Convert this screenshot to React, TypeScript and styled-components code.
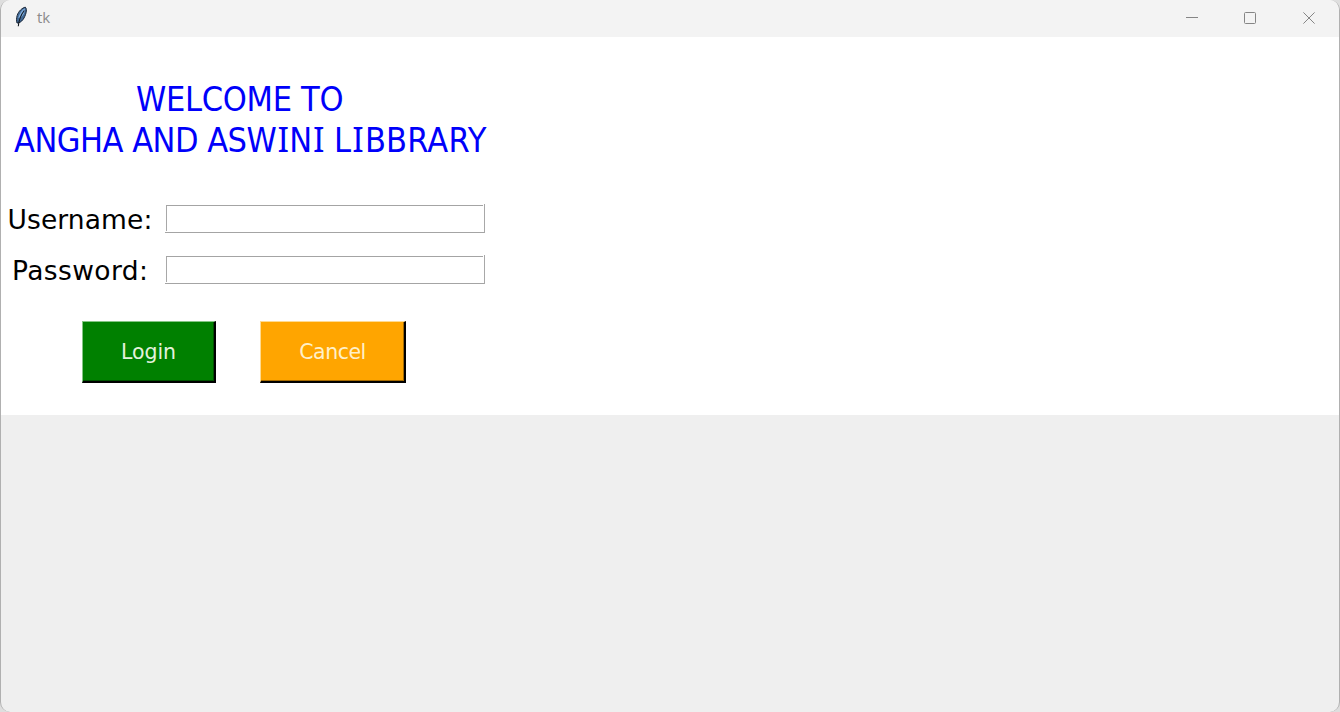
import React from "react";
import styled, { createGlobalStyle } from "styled-components";

const GlobalStyle = createGlobalStyle`
  * { box-sizing: border-box; }
  body { margin: 0; background: #d4d4d4; overflow: hidden; }
`;

const Desktop = styled.div`
  height: 712px;
  background: #dedede;
`;

const Window = styled.main`
  display: flex;
  flex-direction: column;
  width: 1340px;
  height: 712px;
  overflow: hidden;
  background: #efefef;
  border: solid #b0b0b0;
  border-width: 0 1px;
  border-radius: 10px;
`;

const TitleBar = styled.header`
  display: flex;
  align-items: flex-start;
  height: 37px;
  flex: none;
  background: #f3f3f3;
  padding-left: 13px;
`;

const AppName = styled.span`
  flex: 1;
  margin-left: 8px;
  color: #8b8b8b;
  font: 15px/35px "Open Sans", sans-serif;
`;

const Controls = styled.div`
  display: flex;
  height: 36px;
  margin-right: 1px;
`;

const ControlButton = styled.button`
  display: grid;
  place-items: center;
  width: 58.5px;
  height: 36px;
  padding: 0;
  border: 0;
  background: none;
`;

const Form = styled.form`
  flex: none;
  height: 378px;
  padding-top: 42px;
  background: #fff;
`;

const Heading = styled.h1`
  width: 497px;
  margin: 0;
  color: #0000fa;
  font: 400 34px/41px "DejaVu Sans Condensed", "DejaVu Sans", sans-serif;
  font-stretch: condensed;
  white-space: nowrap;
`;

const HeadingLine = styled.span<{ $indent: number; $spacing: number }>`
  display: block;
  height: 41px;
  padding-left: ${(p) => p.$indent}px;
  letter-spacing: ${(p) => p.$spacing}px;
`;

const BarredI = styled.span`
  margin: 0 0.8px 0 1.2px;
  font-family: "Noto Sans", sans-serif;
  font-stretch: normal;
  line-height: 0;
`;

const Word = styled.span<{ $spacing: number }>`
  letter-spacing: ${(p) => p.$spacing}px;
`;

const Fields = styled.div`
  display: grid;
  gap: 21px;
  margin-top: 43px;
`;

const Field = styled.div`
  display: flex;
  align-items: center;
  height: 30px;
`;

const Label = styled.label<{ $indent: number; $spacing: number }>`
  width: 164px;
  padding: 2px 0 0 ${(p) => p.$indent}px;
  color: #000;
  font: 26.5px/30px "DejaVu Sans", sans-serif;
  letter-spacing: ${(p) => p.$spacing}px;
  white-space: nowrap;
`;

/* Sunken groove: the bottom and right edges run one pixel past the others. */
const Input = styled.input`
  width: 320px;
  height: 30px;
  padding: 2px 5px;
  border: 0;
  outline: 0;
  background:
    linear-gradient(#a4a4a4 0 0) 1px 1px / 317px 1px no-repeat,
    linear-gradient(#a8a8a8 0 0) 1px 1px / 1px 26px no-repeat,
    linear-gradient(#a8a8a8 0 0) 319px 0 / 1px 29px no-repeat,
    linear-gradient(#a4a4a4 0 0) 0 28px / 320px 1px no-repeat,
    #fff;
  font: 20px "DejaVu Sans", sans-serif;
`;

const Actions = styled.div`
  display: flex;
  gap: 44px;
  margin: 36px 0 0 81px;
`;

const ActionButton = styled.button<{ $width: number; $color: string; $light: string; $dark: string; $text: string; $spacing: number }>`
  width: ${(p) => p.$width}px;
  height: 62px;
  padding: 2px 0 0;
  border: solid;
  border-width: 1px 2px 2px 1px;
  border-color: ${(p) => p.$light} #000 #000 ${(p) => p.$light};
  box-shadow: inset -1px -1px ${(p) => p.$dark};
  background: ${(p) => p.$color};
  color: ${(p) => p.$text};
  font: 20.5px/57px "DejaVu Sans", sans-serif;
  letter-spacing: ${(p) => p.$spacing}px;
`;

const FeatherIcon = styled.svg`
  flex: none;
  margin-top: 6px;
`;

const Feather = () => (
  <FeatherIcon width="15" height="22" viewBox="0 0 15 22" aria-hidden="true">
    <path d="M11.3 1.2C8.3 1.8 4.4 5.2 3.2 9.4 2.4 12 2.3 14.6 3 17c2.1.1 4.4-1.2 6.1-3.6C11.5 10 13.8 3.3 11.3 1.2Z" fill="#426995" stroke="#182536" strokeWidth="1" />
    <path d="M10.7 2.3C8 4 5.6 7.5 4.2 12l3-1c2.7-2 4.2-5.5 3.5-8.7Z" fill="#82b0e0" />
    <path d="M10.3 4.5C7.5 8 5 13 4.3 20.2" fill="none" stroke="#111820" strokeWidth="1.1" />
  </FeatherIcon>
);

export default function App() {
  return (
    <Desktop>
      <GlobalStyle />
      <Window>
        <TitleBar>
          <Feather />
          <AppName>tk</AppName>
          <Controls>
            <ControlButton aria-label="Minimize">
              <svg width="12" height="12" viewBox="0 0 12 12"><path d="M0 5.5h12" stroke="#858585" /></svg>
            </ControlButton>
            <ControlButton aria-label="Maximize">
              <svg width="12" height="12" viewBox="0 0 12 12"><rect x=".5" y=".5" width="11" height="11" rx="1" fill="none" stroke="#858585" /></svg>
            </ControlButton>
            <ControlButton aria-label="Close">
              <svg width="12" height="12" viewBox="0 0 12 12"><path d="m.4.4 11.2 11.2m0-11.2L.4 11.6" stroke="#858585" /></svg>
            </ControlButton>
          </Controls>
        </TitleBar>
        <Form>
          <Heading>
            <HeadingLine $indent={135} $spacing={-0.3}>WELCOME TO</HeadingLine>
            <HeadingLine $indent={13} $spacing={-0.5}>
              ANGHA AND ASW<BarredI>I</BarredI>N<BarredI>I</BarredI>{" "}
              <Word $spacing={0.2}>L<BarredI>I</BarredI>BBRARY</Word>
            </HeadingLine>
          </Heading>
          <Fields>
            <Field>
              <Label htmlFor="username" $indent={6.5} $spacing={0.1}>Username:</Label>
              <Input id="username" />
            </Field>
            <Field>
              <Label htmlFor="password" $indent={11} $spacing={0.4}>Password:</Label>
              <Input id="password" type="password" />
            </Field>
          </Fields>
          <Actions>
            <ActionButton type="button" $width={134} $color="#008000" $light="#84c684" $dark="#005000" $text="#e4f2dc" $spacing={-0.1}>Login</ActionButton>
            <ActionButton type="button" $width={146} $color="#ffa500" $light="#ffdb91" $dark="#a66b00" $text="#fff0c9" $spacing={-0.5}>Cancel</ActionButton>
          </Actions>
        </Form>
      </Window>
    </Desktop>
  );
}
